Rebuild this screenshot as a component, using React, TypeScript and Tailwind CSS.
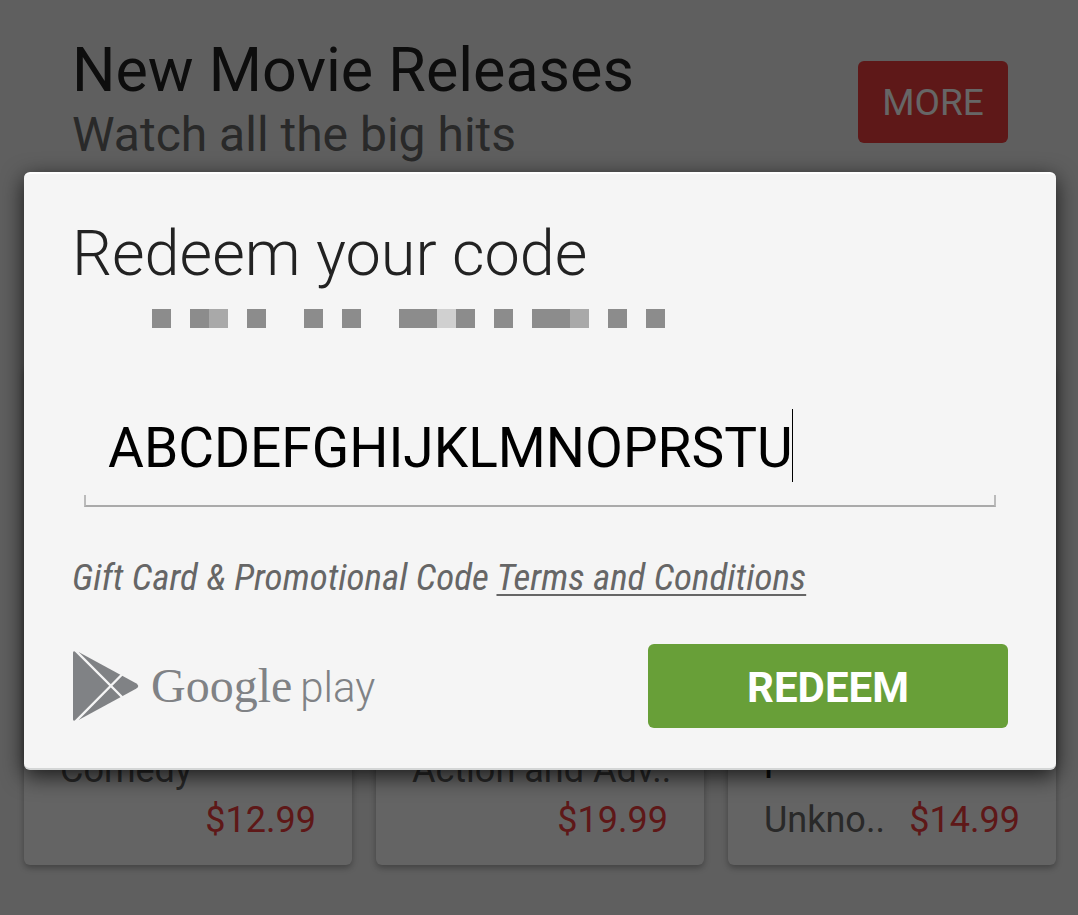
import React from "react";

type Movie = { title?: string; genre?: string; badge?: string; price: string };

const movies: Movie[] = [
  { genre: "Comedy", price: "$12.99" },
  { genre: "Action and Adv..", price: "$19.99" },
  { title: "p", badge: "Unkno..", price: "$14.99" },
];

const D = "bg-[#8c8c8c]";
const M = "bg-[#a9a9a9]";
const L = "bg-[#d0d0d0]";
const N = "";
const mask = [D, N, D, M, N, D, N, N, D, N, D, N, N, D, D, L, D, N, D, N, D, D, M, N, D, N, D];

function MovieCard({ movie }: { movie: Movie }) {
  return (
    <article className="flex h-[500px] flex-col justify-end rounded-md bg-[#fafafa] px-9 pb-6 text-4xl whitespace-nowrap text-[#666] shadow-[0_3px_6px_rgba(0,0,0,0.3)]">
      {movie.genre && <p className="mb-2 leading-[42px]">{movie.genre}</p>}
      {movie.title && <p className="mb-4 text-[40px] leading-[52px] text-[#222]">{movie.title}</p>}
      <div className="flex justify-between leading-[42px]">
        <span>{movie.badge}</span>
        <span className="text-[#eb3c3c]">{movie.price}</span>
      </div>
    </article>
  );
}

function PlayLogo() {
  return (
    <div className="ml-px flex items-center gap-3 text-[#808285]" role="img" aria-label="Google play">
      <svg viewBox="0 0 66 70" className="h-[70px] w-[66px]" aria-hidden="true">
        <path d="M0 1.5Q0 0 2 .3L6 1.200L63 32.200Q67.500 35 63 37.800L6 68.800L2 69.700Q0 70 0 68.500Z" fill="currentColor" />
        <path d="M1.500 -1.500L50 47M1.500 71.500L50 22.500" stroke="#f5f5f5" strokeWidth="2.400" />
      </svg>
      <div className="flex items-baseline gap-2 leading-none">
        <span className="font-['Liberation_Serif',serif] text-5xl">Google</span>
        <span className="text-[42px] font-light">play</span>
      </div>
    </div>
  );
}

export default function App() {
  return (
    <div className="relative min-h-screen overflow-hidden bg-[#ededed] font-['Roboto',sans-serif]">
      <main className="flex min-h-screen flex-col justify-between pb-[50px]">
        <header className="flex items-start justify-between pt-[35px] pr-[70px] pl-[72px]">
          <div>
            <h1 className="text-[61px] leading-[70px] text-[#222]">New Movie Releases</h1>
            <p className="text-5xl leading-[60px] text-[#666]">Watch all the big hits</p>
          </div>
          <button className="mt-[26px] h-[82px] w-[150px] rounded-md bg-[#eb3c3c] pt-0.5 text-[37px] text-white">MORE</button>
        </header>
        <section className="-mt-4 grid grid-cols-3 gap-6 pr-[22px] pl-6">
          {movies.map((m) => (
            <MovieCard key={m.price} movie={m} />
          ))}
        </section>
      </main>

      <div className="absolute inset-0 bg-black/60 pt-[172px] pr-[22px] pl-6">
        <form
          role="dialog"
          aria-labelledby="redeem-title"
          onSubmit={(e) => e.preventDefault()}
          className="rounded-md border-t-2 border-b-2 border-t-white border-b-[#d4d6d6] bg-[#f5f5f5] px-12 pt-11 pb-10 shadow-[0_6px_22px_rgba(0,0,0,0.75)]"
        >
          <h2 id="redeem-title" className="text-[63px] leading-[72px] font-light text-[#222]">
            Redeem your code
          </h2>
          <div className="mt-[19px] ml-20 flex h-[19px]" aria-hidden="true">
            {mask.map((c, i) => (
              <span key={i} className={`w-[19px] ${c}`} />
            ))}
          </div>
          <div className="relative mt-[81px] mr-3 ml-3">
            <input
              aria-label="Code"
              defaultValue="ABCDEFGHIJKLMNOPRSTU"
              className="block h-[74px] w-full bg-transparent pt-1 pl-6 text-[55px] text-black caret-transparent outline-none"
            />
            <span className="absolute top-0 left-[708px] h-[73px] w-px bg-black" />
            <div className="mt-3 h-3 border-2 border-t-0 border-x-[#bbb] border-b-[#aaa]" />
          </div>
          <p className="mt-[47px] font-['Roboto_Condensed','Liberation_Sans_Narrow',sans-serif] text-[37px] leading-[48px] text-[#666] italic">
            Gift Card &amp; Promotional Code{" "}
            <a href="#terms" className="underline decoration-2 underline-offset-4">
              Terms and Conditions
            </a>
          </p>
          <div className="mt-[42px] flex items-center justify-between">
            <PlayLogo />
            <button className="h-[84px] w-[360px] rounded-md bg-[#689f38] pt-0.5 text-[42px] font-bold text-white">
              REDEEM
            </button>
          </div>
        </form>
      </div>
    </div>
  );
}
